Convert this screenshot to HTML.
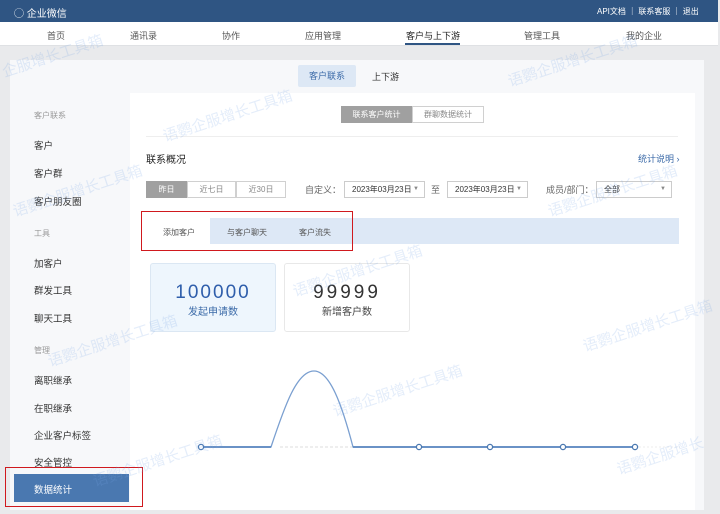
<!DOCTYPE html><html><head><meta charset="utf-8"><style>
*{margin:0;padding:0;box-sizing:border-box}
body{width:720px;height:514px;overflow:hidden;background:#e9eaec;font-family:"Liberation Sans","Noto Sans CJK SC",sans-serif;position:relative;font-size:9px;color:#333}
.a{position:absolute;white-space:nowrap}
.top{left:0;top:0;width:718px;height:22px;background:#2f5583;color:#fff}
.nav{left:0;top:22px;width:718px;height:24px;background:#fff;border-bottom:1px solid #dfe1e4}
.card{left:10px;top:60px;width:694px;height:450px;background:#f7f8fa}
.side{left:14px;top:93px;width:116px;height:417px;background:#f7f8fa}
.main{left:130px;top:93px;width:565px;height:417px;background:#fff}
.si{left:34px;font-size:9.5px;color:#333}
.sh{left:34px;font-size:8px;color:#999}
.btn{border:1px solid #d0d0d0;background:#fff;color:#888;font-size:8px;text-align:center;line-height:15px;height:17px}
.sel{border:1px solid #ccc;background:#fff;font-size:8px;line-height:15px;height:17px;padding-left:7px;color:#333}
.sel i{position:absolute;right:5px;font-style:normal;color:#888;font-size:6px}
.wm{color:rgba(120,165,230,.2);font-size:15px;transform:rotate(-18deg)}
</style></head><body>
<div class="a top"><span class="a" style="left:14px;top:5px;font-size:10px">◯ 企业微信</span><span class="a" style="left:597px;top:6px;font-size:8px">API文档 ｜ 联系客服 ｜ 退出</span></div>
<div class="a nav">
<span class="a" style="left:47px;top:7px;color:#555">首页</span>
<span class="a" style="left:130px;top:7px;color:#555">通讯录</span>
<span class="a" style="left:222px;top:7px;color:#555">协作</span>
<span class="a" style="left:305px;top:7px;color:#555">应用管理</span>
<span class="a" style="left:406px;top:7px;color:#222">客户与上下游</span>
<div class="a" style="left:405px;top:21px;width:55px;height:2px;background:#2f5583"></div>
<span class="a" style="left:524px;top:7px;color:#555">管理工具</span>
<span class="a" style="left:626px;top:7px;color:#555">我的企业</span>
</div>
<div class="a card"></div>
<div class="a" style="left:298px;top:65px;width:58px;height:22px;background:#dde8f5;border-radius:2px;color:#3b6aa8;text-align:center;line-height:22px">客户联系</div>
<span class="a" style="left:372px;top:70px;color:#333">上下游</span>
<div class="a side"></div>
<div class="a main"></div>
<span class="a sh" style="top:110px">客户联系</span>
<span class="a si" style="top:138px">客户</span>
<span class="a si" style="top:166px">客户群</span>
<span class="a si" style="top:194px">客户朋友圈</span>
<span class="a sh" style="top:228px">工具</span>
<span class="a si" style="top:256px">加客户</span>
<span class="a si" style="top:283px">群发工具</span>
<span class="a si" style="top:311px">聊天工具</span>
<span class="a sh" style="top:345px">管理</span>
<span class="a si" style="top:373px">离职继承</span>
<span class="a si" style="top:401px">在职继承</span>
<span class="a si" style="top:428px">企业客户标签</span>
<span class="a si" style="top:455px">安全管控</span>
<div class="a" style="left:14px;top:474px;width:115px;height:28px;background:#4a78b0"></div>
<span class="a" style="left:34px;top:482px;color:#fff;font-size:9.5px">数据统计</span>
<div class="a" style="left:5px;top:467px;width:138px;height:40px;border:1.5px solid #d0191e"></div>
<div class="a btn" style="left:341px;top:106px;width:71px;background:#a0a0a0;color:#fff;border-color:#a0a0a0">联系客户统计</div>
<div class="a btn" style="left:412px;top:106px;width:72px">群聊数据统计</div>
<div class="a" style="left:146px;top:136px;width:532px;height:1px;background:#eee"></div>
<span class="a" style="left:146px;top:151px;font-size:10px;color:#222">联系概况</span>
<span class="a" style="left:638px;top:152px;font-size:9px;color:#3b6aa8">统计说明 ›</span>
<div class="a btn" style="left:146px;top:181px;width:41px;background:#a0a0a0;color:#fff;border-color:#a0a0a0">昨日</div>
<div class="a btn" style="left:187px;top:181px;width:49px">近七日</div>
<div class="a btn" style="left:236px;top:181px;width:50px">近30日</div>
<span class="a" style="left:305px;top:183px;color:#666">自定义：</span>
<div class="a sel" style="left:344px;top:181px;width:81px">2023年03月23日<i>▼</i></div>
<span class="a" style="left:431px;top:183px;color:#666">至</span>
<div class="a sel" style="left:447px;top:181px;width:81px">2023年03月23日<i>▼</i></div>
<span class="a" style="left:546px;top:183px;color:#666">成员/部门：</span>
<div class="a sel" style="left:596px;top:181px;width:76px">全部<i>▼</i></div>
<div class="a" style="left:146px;top:218px;width:533px;height:26px;background:#dde8f6"></div>
<div class="a" style="left:146px;top:218px;width:64px;height:26px;background:#fff"></div>
<span class="a" style="left:163px;top:227px;font-size:8px;color:#555">添加客户</span>
<span class="a" style="left:227px;top:227px;font-size:8px;color:#555">与客户聊天</span>
<span class="a" style="left:299px;top:227px;font-size:8px;color:#555">客户流失</span>
<div class="a" style="left:141px;top:211px;width:212px;height:40px;border:1.5px solid #d0191e"></div>
<div class="a" style="left:150px;top:263px;width:126px;height:69px;background:#eef6fd;border:1px solid #dbe7f3;border-radius:3px;text-align:center">
<div style="font-size:19px;color:#2f5eab;letter-spacing:2px;margin-top:19px;line-height:20px">100000</div><div style="color:#3b6aa8;font-size:10px">发起申请数</div></div>
<div class="a" style="left:284px;top:263px;width:126px;height:69px;background:#fff;border:1px solid #e8e8e8;border-radius:3px;text-align:center">
<div style="font-size:19px;color:#333;letter-spacing:3px;margin-top:19px;line-height:20px">99999</div><div style="color:#444;font-size:10px">新增客户数</div></div>
<svg class="a" style="left:0;top:0" width="720" height="514">
<line x1="280" y1="447" x2="353" y2="447" stroke="#ddd" stroke-dasharray="3,2"/>
<line x1="635" y1="447" x2="680" y2="447" stroke="#eee" stroke-dasharray="2,2"/>
<path d="M201 447 H271 C285 405 297 371 314 371 C330 371 342 405 353 447 H635" fill="none" stroke="#7a9fd0" stroke-width="1.3"/>
<path d="M201 447 H271 M353 447 H635" stroke="#5a86c0" stroke-width="1.8"/>
<g fill="#fff" stroke="#4a78b0" stroke-width="1.3"><circle cx="201" cy="447" r="2.6"/><circle cx="419" cy="447" r="2.6"/><circle cx="490" cy="447" r="2.6"/><circle cx="563" cy="447" r="2.6"/><circle cx="635" cy="447" r="2.6"/></g>
</svg>
<span class="a wm" style="left:0px;top:45px">企服增长工具箱</span>
<span class="a wm" style="left:505px;top:50px">语鹦企服增长工具箱</span>
<span class="a wm" style="left:160px;top:105px">语鹦企服增长工具箱</span>
<span class="a wm" style="left:10px;top:180px">语鹦企服增长工具箱</span>
<span class="a wm" style="left:545px;top:180px">语鹦企服增长工具箱</span>
<span class="a wm" style="left:290px;top:260px">语鹦企服增长工具箱</span>
<span class="a wm" style="left:45px;top:330px">语鹦企服增长工具箱</span>
<span class="a wm" style="left:580px;top:315px">语鹦企服增长工具箱</span>
<span class="a wm" style="left:330px;top:380px">语鹦企服增长工具箱</span>
<span class="a wm" style="left:90px;top:450px">语鹦企服增长工具箱</span>
<span class="a wm" style="left:615px;top:445px">语鹦企服增长</span>
</body></html>
